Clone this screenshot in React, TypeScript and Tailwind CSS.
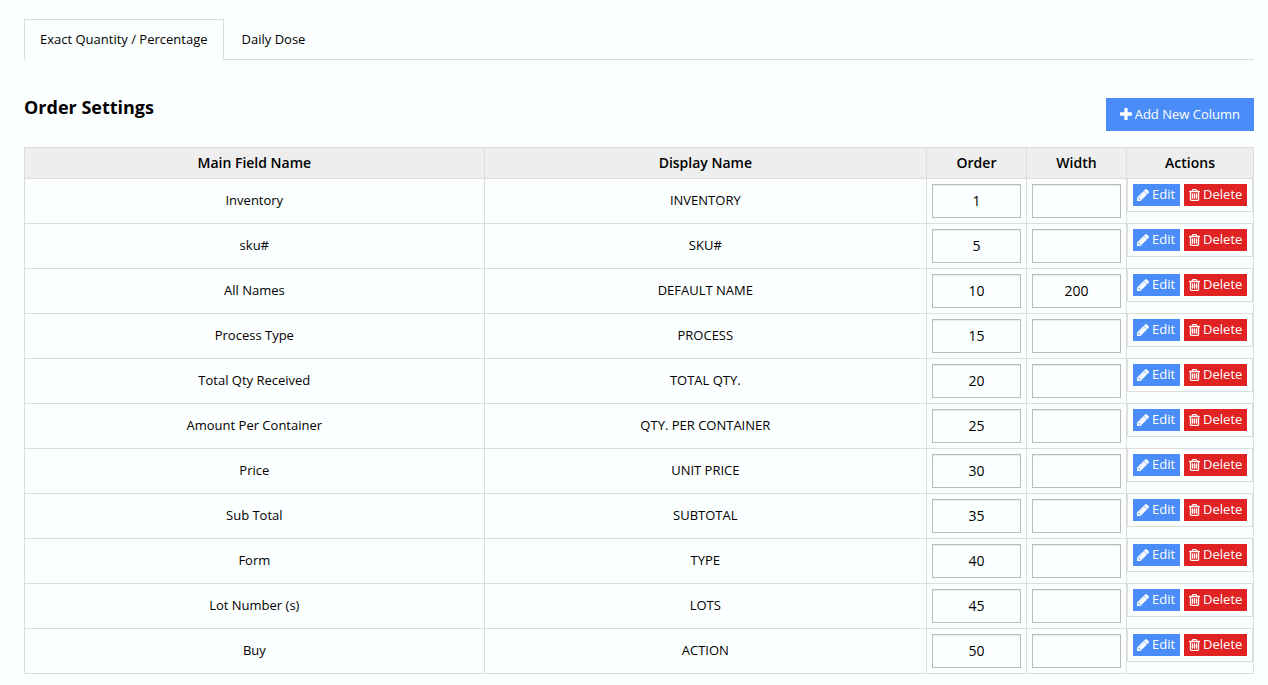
import { useState } from 'react';

type Column = {
  field: string;
  display: string;
  order: string;
  width: string;
};

const TABS = ['Exact Quantity / Percentage', 'Daily Dose'];

const COLUMNS: Column[] = [
  { field: 'Inventory', display: 'INVENTORY', order: '1', width: '' },
  { field: 'sku#', display: 'SKU#', order: '5', width: '' },
  { field: 'All Names', display: 'DEFAULT NAME', order: '10', width: '200' },
  { field: 'Process Type', display: 'PROCESS', order: '15', width: '' },
  { field: 'Total Qty Received', display: 'TOTAL QTY.', order: '20', width: '' },
  { field: 'Amount Per Container', display: 'QTY. PER CONTAINER', order: '25', width: '' },
  { field: 'Price', display: 'UNIT PRICE', order: '30', width: '' },
  { field: 'Sub Total', display: 'SUBTOTAL', order: '35', width: '' },
  { field: 'Form', display: 'TYPE', order: '40', width: '' },
  { field: 'Lot Number (s)', display: 'LOTS', order: '45', width: '' },
  { field: 'Buy', display: 'ACTION', order: '50', width: '' },
];

function PlusIcon() {
  return (
    <svg viewBox="192 128 1408 1408" className="size-3 fill-current" aria-hidden="true">
      <path d="M1600 736v192q0 40-28 68t-68 28h-416v416q0 40-28 68t-68 28h-192q-40 0-68-28t-28-68v-416h-416q-40 0-68-28t-28-68v-192q0-40 28-68t68-28h416v-416q0-40 28-68t68-28h192q40 0 68 28t28 68v416h416q40 0 68 28t28 68z" />
    </svg>
  );
}

function PencilIcon() {
  return (
    <svg
      viewBox="128 128 1536 1536"
      className="size-3 fill-current stroke-current stroke-[50]"
      aria-hidden="true"
    >
      <path d="M491 1536l91-91-235-235-91 91v107h128v128h107zm523-928q0-22-22-22-10 0-17 7l-542 542q-7 7-7 17 0 22 22 22 10 0 17-7l542-542q7-7 7-17zm-54-192l416 416-832 832h-416v-416zm683 96q0 53-37 90l-166 166-416-416 166-165q36-38 90-38 53 0 91 38l235 234q37 39 37 91z" />
    </svg>
  );
}

function TrashIcon() {
  return (
    <svg
      viewBox="192 128 1408 1536"
      className="h-3 w-[11px] fill-current stroke-current stroke-[50]"
      aria-hidden="true"
    >
      <path d="M704 736v576q0 14-9 23t-23 9h-64q-14 0-23-9t-9-23v-576q0-14 9-23t23-9h64q14 0 23 9t9 23zm256 0v576q0 14-9 23t-23 9h-64q-14 0-23-9t-9-23v-576q0-14 9-23t23-9h64q14 0 23 9t9 23zm256 0v576q0 14-9 23t-23 9h-64q-14 0-23-9t-9-23v-576q0-14 9-23t23-9h64q14 0 23 9t9 23zm128 724v-948h-896v948q0 22 7 40.5t14.5 27 10.5 8.5h832q3 0 10.5-8.5t14.5-27 7-40.5zm-672-1076h448l-48-117q-7-9-17-11h-317q-10 2-17 11zm928 32v64q0 14-9 23t-23 9h-96v948q0 83-47 143.5t-113 60.5h-832q-66 0-113-58.5t-47-141.5v-952h-96q-14 0-23-9t-9-23v-64q0-14 9-23t23-9h309l70-167q15-37 54-63t79-26h320q40 0 79 26t54 63l70 167h309q14 0 23 9t9 23z" />
    </svg>
  );
}

function NumberBox({ label, value }: { label: string; value: string }) {
  return (
    <input
      type="text"
      aria-label={label}
      defaultValue={value}
      className="block h-[34px] w-full border border-[#bbbbbf] bg-transparent px-3 pb-[2px] text-center text-sm shadow-[inset_0_1px_1px_rgba(0,0,0,0.08)] outline-none focus:border-[#999]"
    />
  );
}

function ColumnRow({ column }: { column: Column }) {
  return (
    <tr>
      <td className="border border-[#ddd] pb-[2px]">{column.field}</td>
      <td className="border border-[#ddd] pb-[2px]">{column.display}</td>
      <td className="border border-[#ddd] p-[5px]">
        <NumberBox label={`${column.field} order`} value={column.order} />
      </td>
      <td className="border border-[#ddd] p-[5px]">
        <NumberBox label={`${column.field} width`} value={column.width} />
      </td>
      <td className="border border-[#ddd] p-0 align-top">
        <div className="flex gap-1 border-x border-b border-[#ddd] p-[5px] text-white">
          <button className="flex h-[22px] items-center gap-[3px] bg-[#4b8df8] pr-[5px] pl-1 hover:bg-[#3b7de8]">
            <PencilIcon />
            <span className="pb-[2px]">Edit</span>
          </button>
          <button className="flex h-[22px] items-center gap-[3px] bg-[#e02222] px-[5px] hover:bg-[#c91d1d]">
            <TrashIcon />
            <span className="pb-[2px]">Delete</span>
          </button>
        </div>
      </td>
    </tr>
  );
}

export default function App() {
  const [tab, setTab] = useState(0);

  return (
    <div className="min-h-screen bg-[#fcffff] pt-[19px] pr-[14px] pl-6 font-['Open_Sans',sans-serif] text-[13px] leading-5 text-black">
      {/* Tabs */}
      <div role="tablist" className="flex gap-[2px] border-b border-[#ddd]">
        {TABS.map((name, i) => (
          <button
            key={name}
            role="tab"
            aria-selected={tab === i}
            onClick={() => setTab(i)}
            className={`-mb-px h-[41px] border px-[15px] pb-[2px] ${
              tab === i ? 'border-[#ddd] border-b-[#fcffff] bg-[#fcffff]' : 'border-transparent'
            }`}
          >
            {name}
          </button>
        ))}
      </div>

      {/* Title bar */}
      <div className="mt-[38px] mb-4 flex items-start justify-between">
        <h3 className="text-lg leading-[18px] font-bold">Order Settings</h3>
        <button className="flex h-[33px] items-center gap-[3px] bg-[#4b8df8] px-[14px] pb-[2px] text-white hover:bg-[#3b7de8]">
          <PlusIcon />
          Add New Column
        </button>
      </div>

      <table className="w-full table-fixed border-collapse text-center">
        <colgroup>
          <col className="w-[37.4%]" />
          <col />
          <col className="w-[100px]" />
          <col className="w-[100px]" />
          <col className="w-[127px]" />
        </colgroup>
        <thead>
          <tr className="h-[31px] bg-[#eee] text-sm">
            <th className="border border-[#ddd] font-semibold">Main Field Name</th>
            <th className="border border-[#ddd] font-semibold">Display Name</th>
            <th className="border border-[#ddd] font-semibold">Order</th>
            <th className="border border-[#ddd] font-semibold">Width</th>
            <th className="border border-[#ddd] font-semibold">Actions</th>
          </tr>
        </thead>
        <tbody>
          {COLUMNS.map((column) => (
            <ColumnRow key={column.field} column={column} />
          ))}
        </tbody>
      </table>
    </div>
  );
}
